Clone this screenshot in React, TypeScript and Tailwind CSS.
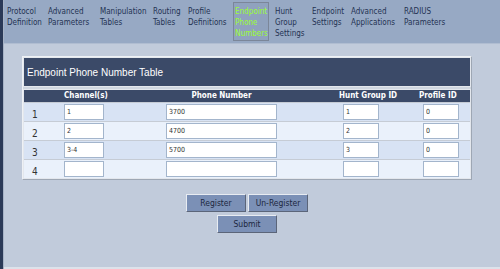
const navItems = [
  { lines: ["Protocol", "Definition"], w: "w-[41px]" },
  { lines: ["Advanced", "Parameters"], w: "w-[52px]" },
  { lines: ["Manipulation", "Tables"], w: "w-[53px]" },
  { lines: ["Routing", "Tables"], w: "w-[35px]" },
  { lines: ["Profile", "Definitions"], w: "w-[45px]" },
];

const navItemsAfter = [
  { lines: ["Hunt", "Group", "Settings"], w: "w-[37px]" },
  { lines: ["Endpoint", "Settings"], w: "w-[39px]" },
  { lines: ["Advanced", "Applications"], w: "w-[53px]" },
  { lines: ["RADIUS", "Parameters"], w: "w-[60px]" },
];

const rows = [
  { n: "1", ch: "1", phone: "3700", hunt: "1", profile: "0" },
  { n: "2", ch: "2", phone: "4700", hunt: "2", profile: "0" },
  { n: "3", ch: "3-4", phone: "5700", hunt: "3", profile: "0" },
  { n: "4", ch: "", phone: "", hunt: "", profile: "" },
];

const narrow = "font-['DejaVu_Sans_Condensed','Liberation_Sans',sans-serif]";

const Field = ({ value, w }: { value: string; w: string }) => (
  <input
    readOnly
    value={value}
    className={`${w} h-[16px] bg-white border border-[#a3b5cc] px-[2px] text-[7px] text-[#333] outline-none ${narrow}`}
  />
);

const NavItem = ({ lines, w }: { lines: string[]; w: string }) => (
  <div className={`${w} shrink-0 pt-[6px]`}>
    {lines.map((l) => (
      <div key={l}>{l}</div>
    ))}
  </div>
);

const Button = ({ label }: { label: string }) => (
  <button
    className={`w-[60px] h-[18px] bg-[#7b90b6] border border-t-[#e8ecf2] border-l-[#e8ecf2] border-b-[#5b6579] border-r-[#5b6579] text-[8.5px] text-[#1c2740] ${narrow}`}
  >
    {label}
  </button>
);

export default function App() {
  return (
    <div className="w-[500px] h-[269px] flex bg-[#c1cbdb] overflow-hidden font-['Liberation_Sans',sans-serif]">
      <div className="w-[3px] h-full bg-[#2b3a58] shrink-0" />
      <div className="w-[1px] h-full bg-[#a7b3c6] shrink-0" />
      <div className="flex-1 flex flex-col">
        <div className={`h-[44px] bg-[#97a9c4] border-b border-[#b0bdd1] flex text-[8px] leading-[11px] text-[#243353] pl-[3px] ${narrow}`}>
          {navItems.map((it) => (
            <NavItem key={it.lines.join()} {...it} />
          ))}
          <div className="shrink-0 w-[36px] mt-[2px] h-[39px] border border-[#7b8699] bg-[#90a2be] text-[#9bff33] pl-[1px] pt-[3px] mr-[6px]">
            <div>Endpoint</div>
            <div>Phone</div>
            <div>Numbers</div>
          </div>
          {navItemsAfter.map((it) => (
            <NavItem key={it.lines.join()} {...it} />
          ))}
        </div>

        <div className="ml-[18px] mt-[12px] w-[450px] bg-[#cfd6e0] border border-[#eef1f5] border-r-[#9ea7b4] border-b-[#9ea7b4]">
          <div className="h-[30px] bg-[#3b4a68] border border-[#e3e7ed] flex items-center pl-[3px] text-[10px] text-white">
            Endpoint Phone Number Table
          </div>
          <div className="mt-[2px] border border-[#e3e7ed]">
            <div className={`h-[12px] bg-[#3b4a68] flex items-center text-[8px] font-bold text-white ${narrow}`}>
              <div className="w-[40px]" />
              <div className="w-[40px] text-center">Channel(s)</div>
              <div className="w-[62px]" />
              <div className="w-[111px] text-center">Phone Number</div>
              <div className="w-[62px]" />
              <div className="w-[50px] text-center whitespace-nowrap">Hunt Group ID</div>
              <div className="w-[30px]" />
              <div className="w-[36px] text-center whitespace-nowrap">Profile ID</div>
            </div>
            {rows.map((r, i) => (
              <div
                key={r.n}
                className={`h-[19px] flex items-start pt-[1px] border-t border-[#c6ccd5] ${
                  i % 2 === 0 ? "bg-[#d8e3f4]" : "bg-[#eaf1fb]"
                }`}
              >
                <div className={`w-[40px] pl-[8px] pt-[3px] text-[10px] text-[#333] ${narrow}`}>{r.n}</div>
                <Field value={r.ch} w="w-[40px]" />
                <div className="w-[62px]" />
                <Field value={r.phone} w="w-[111px]" />
                <div className="w-[66px]" />
                <Field value={r.hunt} w="w-[36px]" />
                <div className="w-[44px]" />
                <Field value={r.profile} w="w-[36px]" />
              </div>
            ))}
          </div>
        </div>

        <div className="ml-[18px] w-[450px] mt-[14px] flex flex-col items-center gap-[3px]">
          <div className="flex gap-[2px]">
            <Button label="Register" />
            <Button label="Un-Register" />
          </div>
          <Button label="Submit" />
        </div>
        <div className="mt-auto h-[2px] bg-[#dde2ea]" />
      </div>
    </div>
  );
}
